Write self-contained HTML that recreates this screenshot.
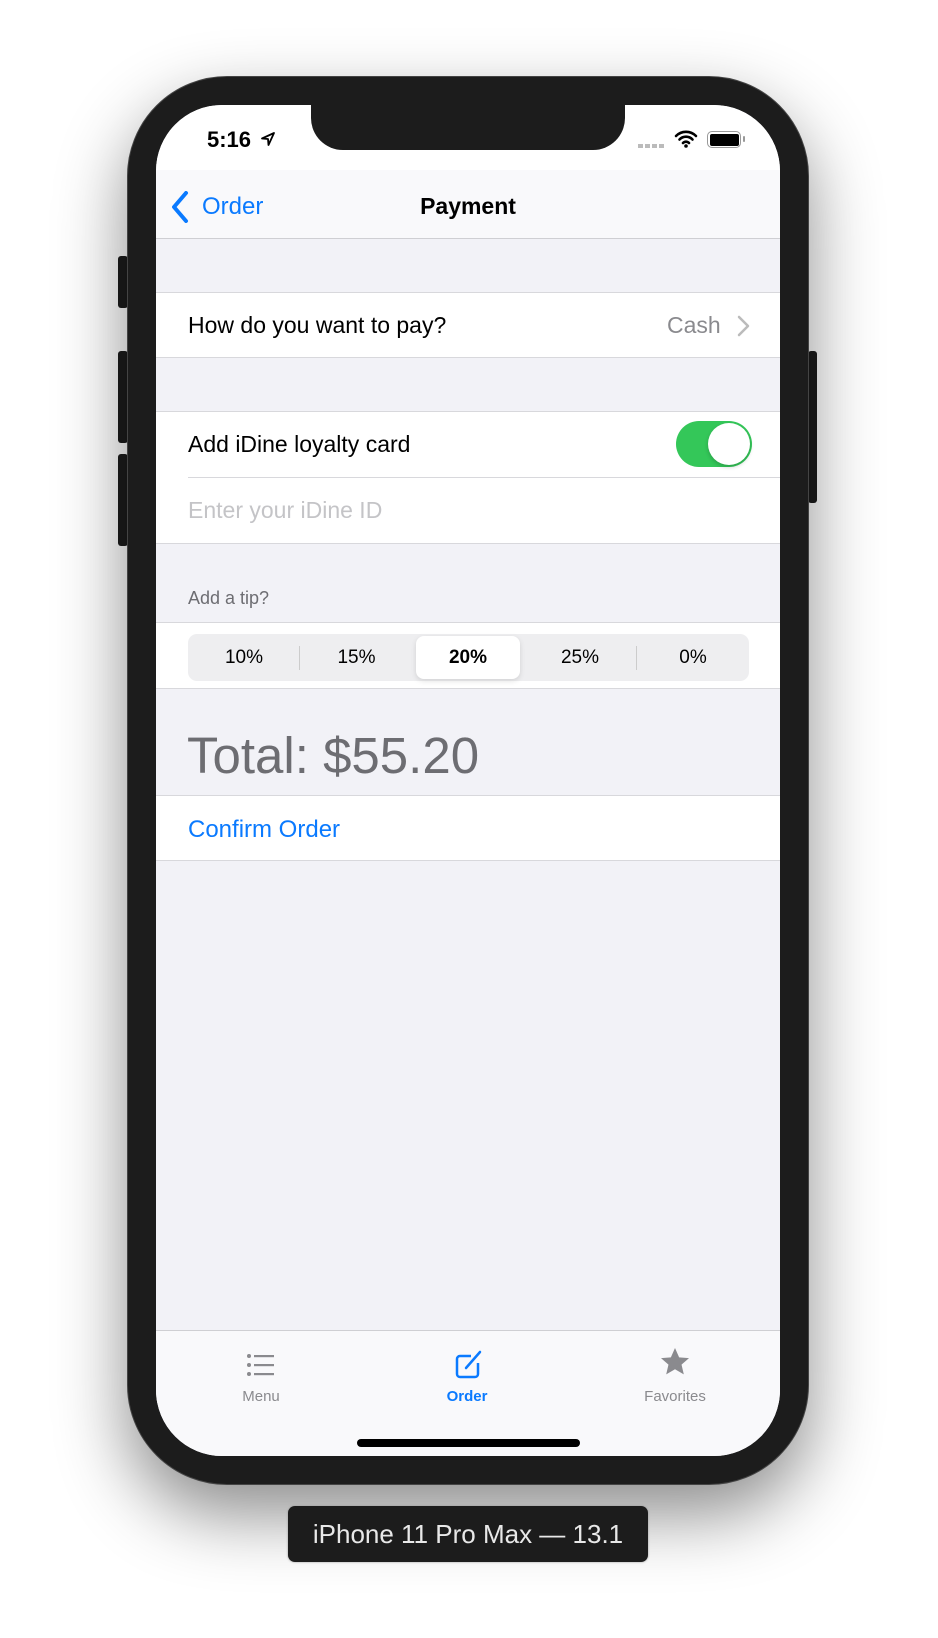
<!DOCTYPE html>
<html><head><meta charset="utf-8"><style>
*{margin:0;padding:0;box-sizing:border-box}
body{width:938px;height:1638px;background:#fff;position:relative;overflow:hidden;font-family:"Liberation Sans",sans-serif}
.abs{position:absolute}
.phone{left:127px;top:76px;width:682px;height:1409px;background:#1c1c1c;border-radius:100px;box-shadow:0 30px 70px rgba(0,0,0,.45);border:1px solid #444}
.screen{left:156px;top:105px;width:624px;height:1351px;background:#f2f2f7;border-radius:66px;overflow:hidden}
.btn{background:#1c1c1c;border-radius:3px}
.row{position:absolute;left:0;width:624px;background:#fff;border-top:1px solid #d8d8dc;border-bottom:1px solid #d8d8dc}
.t{position:absolute;font-size:23px;color:#000;white-space:nowrap}
</style></head><body>
<div class="abs btn" style="left:118px;top:256px;width:10px;height:52px"></div>
<div class="abs btn" style="left:118px;top:351px;width:10px;height:92px"></div>
<div class="abs btn" style="left:118px;top:454px;width:10px;height:92px"></div>
<div class="abs btn" style="left:808px;top:351px;width:9px;height:152px"></div>
<div class="abs phone"></div>
<div class="abs screen">
  <div class="abs" style="left:0;top:0;width:624px;height:65px;background:#fff"></div>
  <div class="abs" style="left:0;top:65px;width:624px;height:69px;background:#f9f9fb;border-bottom:1px solid #cfcfd3"></div>
  <div class="abs" style="left:155px;top:-5px;width:314px;height:50px;background:#1c1c1c;border-radius:0 0 32px 32px"></div>
  <div class="t" style="left:51px;top:22px;font-size:22px;font-weight:bold">5:16</div>
  <svg class="abs" style="left:104px;top:26px" width="16" height="16" viewBox="0 0 16 16"><path d="M14 2L2 7.5l6 .5.5 6z" fill="none" stroke="#000" stroke-width="1.8" stroke-linejoin="round"/></svg>
  <div class="abs" style="left:482px;top:39px;width:26px;height:4px;background:repeating-linear-gradient(90deg,#bbb 0 5px,transparent 5px 7px)"></div>
  <svg class="abs" style="left:518px;top:25px" width="24" height="18" viewBox="0 0 24 18"><path d="M2 6a14 14 0 0 1 20 0M5.5 9.5a9 9 0 0 1 13 0M9 13a4 4 0 0 1 6 0" fill="none" stroke="#000" stroke-width="2.6" stroke-linecap="round"/><circle cx="12" cy="16" r="1.8"/></svg>
  <div class="abs" style="left:551px;top:26px;width:34px;height:17px;border:1.5px solid #999;border-radius:5px;padding:1.5px"><div style="background:#000;width:100%;height:100%;border-radius:2px"></div></div>
  <div class="abs" style="left:587px;top:31px;width:2px;height:6px;background:#999;border-radius:1px"></div>
  <svg class="abs" style="left:15px;top:86px" width="18" height="32" viewBox="0 0 18 32"><path d="M15 2L3 16l12 14" fill="none" stroke="#0a7aff" stroke-width="4" stroke-linecap="round" stroke-linejoin="round"/></svg>
  <div class="t" style="left:46px;top:88px;font-size:24px;color:#0a7aff">Order</div>
  <div class="t" style="left:0;width:624px;text-align:center;top:88px;font-size:23px;font-weight:bold">Payment</div>

  <div class="row" style="top:187px;height:66px"></div>
  <div class="t" style="left:32px;top:207px">How do you want to pay?</div>
  <div class="t" style="left:511px;top:207px;color:#8a8a8e">Cash</div>
  <svg class="abs" style="left:580px;top:209px" width="14" height="24" viewBox="0 0 14 24"><path d="M3 3l9 9-9 9" fill="none" stroke="#bbb" stroke-width="2.5" stroke-linecap="round" stroke-linejoin="round"/></svg>

  <div class="row" style="top:306px;height:133px"></div>
  <div class="abs" style="left:32px;top:372px;width:592px;height:1px;background:#d8d8dc"></div>
  <div class="t" style="left:32px;top:326px">Add iDine loyalty card</div>
  <div class="abs" style="left:520px;top:316px;width:76px;height:46px;background:#34c759;border-radius:23px"><div style="position:absolute;right:2px;top:2px;width:42px;height:42px;border-radius:50%;background:#fff;box-shadow:0 2px 4px rgba(0,0,0,.2)"></div></div>
  <div class="t" style="left:32px;top:392px;color:#c4c4c7">Enter your iDine ID</div>

  <div class="t" style="left:32px;top:483px;font-size:18px;color:#6d6d72">Add a tip?</div>
  <div class="row" style="top:517px;height:67px"></div>
  <div class="abs" style="left:32px;top:529px;width:561px;height:47px;background:#eeeef0;border-radius:9px"></div>
  <div class="abs" style="left:260px;top:531px;width:104px;height:43px;background:#fff;border-radius:8px;box-shadow:0 2px 6px rgba(0,0,0,.12)"></div>
  <div class="abs" style="left:143px;top:541px;width:1px;height:24px;background:#ccc"></div>
  <div class="abs" style="left:480px;top:541px;width:1px;height:24px;background:#ccc"></div>
  <div class="t" style="left:32px;width:112px;text-align:center;top:542px;font-size:19px">10%</div>
  <div class="t" style="left:144px;width:113px;text-align:center;top:542px;font-size:19px">15%</div>
  <div class="t" style="left:260px;width:104px;text-align:center;top:542px;font-size:19px;font-weight:bold">20%</div>
  <div class="t" style="left:368px;width:112px;text-align:center;top:542px;font-size:19px">25%</div>
  <div class="t" style="left:481px;width:112px;text-align:center;top:542px;font-size:19px">0%</div>

  <div class="t" style="left:31px;top:621px;font-size:51px;color:#6d6d72">Total: $55.20</div>
  <div class="row" style="top:690px;height:66px"></div>
  <div class="t" style="left:32px;top:711px;font-size:24px;color:#0a7aff">Confirm Order</div>

  <div class="abs" style="left:0;top:1225px;width:624px;height:130px;background:#f9f9fb;border-top:1px solid #cfcfd3"></div>
  <svg class="abs" style="left:90px;top:1247px" width="30" height="26" viewBox="0 0 30 26"><g fill="#8a8a8e"><circle cx="3" cy="4" r="2"/><circle cx="3" cy="13" r="2"/><circle cx="3" cy="22" r="2"/><rect x="8" y="3" width="20" height="2.2"/><rect x="8" y="12" width="20" height="2.2"/><rect x="8" y="21" width="20" height="2.2"/></g></svg>
  <div class="t" style="left:60px;width:90px;text-align:center;top:1283px;font-size:15px;color:#8a8a8e">Menu</div>
  <svg class="abs" style="left:298px;top:1243px" width="30" height="32" viewBox="0 0 30 32"><path d="M17 8H6a3 3 0 0 0-3 3v15a3 3 0 0 0 3 3h15a3 3 0 0 0 3-3V15" fill="none" stroke="#0a7aff" stroke-width="2.5"/><path d="M12 20l14-16" stroke="#0a7aff" stroke-width="2.5" stroke-linecap="round"/></svg>
  <div class="t" style="left:266px;width:90px;text-align:center;top:1283px;font-size:15px;color:#0a7aff;font-weight:bold">Order</div>
  <svg class="abs" style="left:503px;top:1241px" width="32" height="32" viewBox="0 0 24 24"><path d="M12 1.5l3.1 7 7.4.6-5.6 4.9 1.7 7.3L12 17.4l-6.6 3.9 1.7-7.3L1.5 9.1l7.4-.6z" fill="#8a8a8e"/></svg>
  <div class="t" style="left:469px;width:100px;text-align:center;top:1283px;font-size:15px;color:#8a8a8e">Favorites</div>
  <div class="abs" style="left:201px;top:1334px;width:223px;height:8px;background:#000;border-radius:4px"></div>
</div>
<div class="abs" style="left:288px;top:1506px;width:360px;height:56px;background:#1c1c1c;border-radius:7px;box-shadow:0 0 2px #999"></div>
<div class="t" style="left:288px;top:1519px;width:360px;text-align:center;font-size:26px;color:#e8e8e8">iPhone 11 Pro Max — 13.1</div>
</body></html>
